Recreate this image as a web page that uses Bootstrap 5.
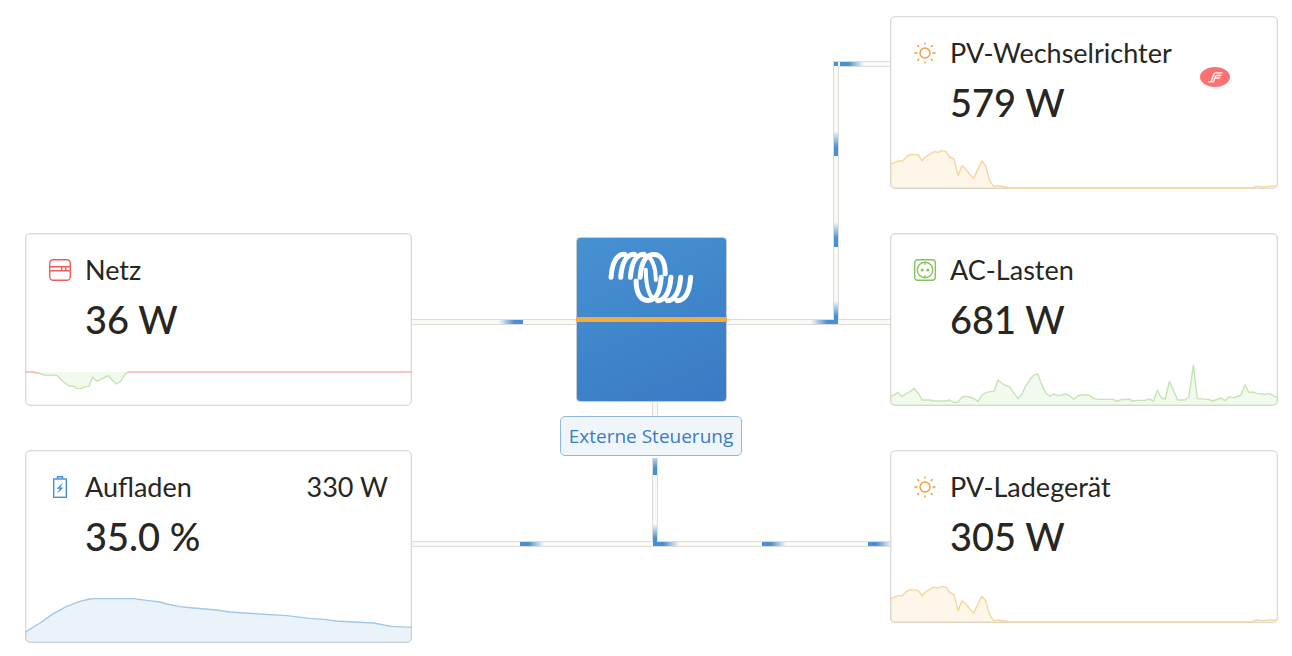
<!DOCTYPE html>
<html lang="de">
<head>
<meta charset="utf-8">
<meta name="viewport" content="width=device-width, initial-scale=1">
<title>Energiefluss</title>
<link href="https://cdn.jsdelivr.net/npm/bootstrap@5.3.0/dist/css/bootstrap.min.css" rel="stylesheet">
<style>
  body { background: #fff; color: #272622; font-family: "Lato", "Open Sans", sans-serif; }
  .energy-grid { display: grid; grid-template-columns: 387fr 478fr 388fr; row-gap: 44px; padding: 16px 14px 12px 25px; }
  .tile { border: 1px solid #dbdad6; border-radius: 5px; box-shadow: inset 0 0 0 1px #f1f1ef; background: #fff; align-self: start; }
  .tile-main { padding: 20px 23px 3px; }
  .tile-icon { width: 22px; height: 22px; margin-right: 14px; flex: none; }
  .tile-title { font-size: 27px; line-height: 32px; font-weight: 400; margin: 0; }
  .tile-value { font-size: 38px; line-height: 48px; font-weight: 500; margin: 9px 0 0 36px; }
  .spark { display: block; width: calc(100% + 2px); height: 60px; margin: 0 -1px -1px; border-radius: 0 0 5px 5px; }
  .spark-tall { height: 80px; }
  .spark polygon { fill-opacity: .11; }
  .spark polyline { fill: none; stroke-width: 1.4; vector-effect: non-scaling-stroke; stroke-linejoin: round; }
  .brand { position: absolute; top: 50px; right: 47px; width: 30px; height: 20px; }
  .pv { grid-area: 1 / 3; } .grid-in { grid-area: 2 / 1; } .loads { grid-area: 2 / 3; }
  .battery { grid-area: 3 / 1; } .charger { grid-area: 3 / 3; }
  .wires { grid-area: 1 / 2 / 4 / 3; position: relative; }
  .wires svg { position: absolute; inset: 0; width: 100%; height: 100%; }
  .hub { grid-area: 2 / 2 / 4 / 3; padding-top: 4px; position: relative; }
  .inverter { width: 151px; height: 165px; border: 1px solid #c5cdd4; border-radius: 4px; background: linear-gradient(155deg, #4791d2, #397ac4); }
  .inverter-logo { height: 79px; padding-top: 13px; }
  .inverter-band { height: 5px; margin: 0 -1px; background: #f7a93b; }
  .mode { margin-top: 14px; height: 40px; padding: 0 8px; border: 1px solid #92b7e1; border-radius: 5px; background: #f0f5fa; color: #387dc5; font: 400 19px/38px "Open Sans", sans-serif; }
</style>
</head>
<body>
<main class="energy-grid">

  <div class="wires" aria-hidden="true">
    <svg viewBox="0 0 478 627" preserveAspectRatio="none">
      <defs>
        <linearGradient id="toRight"><stop offset="0" stop-color="#4790d2" stop-opacity="0"/><stop offset=".65" stop-color="#4790d2"/></linearGradient>
        <linearGradient id="toLeft"><stop offset=".35" stop-color="#4790d2"/><stop offset="1" stop-color="#4790d2" stop-opacity="0"/></linearGradient>
        <linearGradient id="toDown" x2="0" y2="1"><stop offset="0" stop-color="#4790d2" stop-opacity="0"/><stop offset=".65" stop-color="#4790d2"/></linearGradient>
        <linearGradient id="cutDown" x2="0" y2="1"><stop offset="0" stop-color="#4790d2" stop-opacity=".35"/><stop offset=".6" stop-color="#4790d2"/></linearGradient>
      </defs>
      <path fill="none" stroke="#dddcd8" stroke-width="6" d="M0 306H478M424 309V45M421 48H478M0 528H478M243 386V400M243 442V531"/>
      <path fill="none" stroke="#f9f9f5" stroke-width="4" d="M0 306H478M424 308V46M422 48H478M0 528H478M243 386V400M243 442V530"/>
      <rect fill="url(#toRight)" x="87" y="304" width="24" height="4"/>
      <rect fill="url(#toRight)" x="399" y="304" width="25" height="4"/>
      <rect fill="url(#toDown)" x="422" y="115" width="4" height="25"/>
      <rect fill="url(#toDown)" x="422" y="206" width="4" height="25"/>
      <rect fill="url(#toDown)" x="422" y="285" width="4" height="23"/>
      <rect fill="#4790d2" x="422" y="46" width="4" height="4"/>
      <rect fill="url(#toLeft)" x="428" y="46" width="24" height="4"/>
      <rect fill="url(#cutDown)" x="241" y="442" width="4" height="17"/>
      <rect fill="url(#toDown)" x="241" y="508" width="4" height="22"/>
      <rect fill="url(#toLeft)" x="243" y="526" width="24" height="4"/>
      <rect fill="url(#toLeft)" x="108" y="526" width="24" height="4"/>
      <rect fill="url(#toLeft)" x="350" y="526" width="24" height="4"/>
      <rect fill="url(#toLeft)" x="456" y="526" width="24" height="4"/>
    </svg>
  </div>

  <section class="tile pv position-relative">
    <div class="tile-main">
      <div class="d-flex align-items-center">
        <svg class="tile-icon" viewBox="0 0 22 22" fill="none" stroke="#f19b3c" stroke-width="1.400"><circle cx="11" cy="11" r="5"/><path d="M11 .5v2M11 19.500v2M.5 11h3M18.500 11h3M3.300 3.300l1.800 1.800M16.900 16.900l1.800 1.800M3.300 18.700l1.800-1.800M16.900 5.100l1.800-1.800"/></svg>
        <h2 class="tile-title">PV-Wechselrichter</h2>
      </div>
      <p class="tile-value">579 W</p>
    </div>
    <svg class="brand" viewBox="0 0 30 20"><ellipse cx="15" cy="10" rx="15" ry="10" fill="#fc7171"/><path d="M8 14.800h3l2.600-7.200q.6-1.800 2.200-1.800h6.700M11 14.800h2.400l1.800-5q.5-1.300 1.700-1.300h4.300M15.500 11h4.300" fill="none" stroke="#fff" stroke-width="1.300"/></svg>
    <svg class="spark" viewBox="15 354 1164 180" preserveAspectRatio="none">
      <polygon fill="#f7a93b" points="15,534 15,460 40,450 52,450 65,437 76,430 99,431 111,449 124,436 135,429 148,422 160,424 170,419 182,421 194,438 207,444 219,494 231,464 243,475 255,491 266,502 290,450 302,465 314,509 326,526 340,524 375,531 375,534"/>
      <polyline stroke="#f9d49d" points="15,460 40,450 52,450 65,437 76,430 99,431 111,449 124,436 135,429 148,422 160,424 170,419 182,421 194,438 207,444 219,494 231,464 243,475 255,491 266,502 290,450 302,465 314,509 326,526 340,524 375,531 1100,531 1115,526 1135,528 1155,526 1179,525"/>
    </svg>
  </section>

  <section class="tile grid-in">
    <div class="tile-main">
      <div class="d-flex align-items-center">
        <svg class="tile-icon" viewBox="0 0 22 22" fill="none" stroke="#f35c58" stroke-width="1.400"><rect x=".7" y=".7" width="20.600" height="20.600" rx="3.500"/><path d="M1 7.700h20M1 11.700h20M12.700 8v3.500M16.700 8v3.500"/></svg>
        <h2 class="tile-title">Netz</h2>
      </div>
      <p class="tile-value">36 W</p>
    </div>
    <svg class="spark" viewBox="15 363 1161 180" preserveAspectRatio="none">
      <polygon fill="#7fce5a" points="40,441 55,444 72,450 110,451 122,463 135,474 147,483 160,484 170,490 184,491 195,485 207,484 218,456 231,469 265,452 279,468 290,477 302,469 314,449 325,441"/>
      <polyline stroke="#c6e4b3" points="40,442 55,444 72,450 110,451 122,463 135,474 147,483 160,484 170,490 184,491 195,485 207,484 218,456 231,469 265,452 279,468 290,477 302,469 314,449 325,441"/>
      <polyline stroke="#f9b4b1" points="15,441 40,441 55,444"/>
      <polyline stroke="#f9b4b1" points="322,442 330,441 1176,441"/>
    </svg>
  </section>

  <section class="tile loads">
    <div class="tile-main">
      <div class="d-flex align-items-center">
        <svg class="tile-icon" viewBox="0 0 22 22" fill="none" stroke="#83c55d" stroke-width="1.400"><rect x=".7" y=".7" width="20.600" height="20.600" rx="3"/><circle cx="11" cy="11" r="7.700"/><path d="M11 3.300v2.400M11 16.300v2.400"/><circle cx="8.200" cy="11" r="1.500" fill="#83c55d" stroke="none"/><circle cx="13.800" cy="11" r="1.500" fill="#83c55d" stroke="none"/></svg>
        <h2 class="tile-title">AC-Lasten</h2>
      </div>
      <p class="tile-value">681 W</p>
    </div>
    <svg class="spark" viewBox="15 363 1164 180" preserveAspectRatio="none">
      <polygon fill="#7fce5a" points="15,543 15,513 25,511 39,502 51,515 63,506 75,500 87,490 99,503 111,525 135,525 145,528 182,528 194,525 206,532 218,532 231,516 243,514 255,516 267,521 279,529 291,510 303,503 315,500 327,499 339,465 350,474 362,482 375,486 387,505 399,521 411,507 423,481 435,463 446,451 458,446 470,479 482,503 494,514 506,507 518,512 530,510 542,507 554,512 566,523 578,513 590,510 612,510 625,520 640,523 685,523 697,529 709,523 720,524 732,522 744,528 756,526 780,526 793,521 805,529 817,496 829,519 841,522 853,470 865,495 878,525 900,525 912,515 925,420 937,521 970,523 984,528 996,523 1008,519 1020,527 1032,515 1043,518 1055,516 1068,510 1080,480 1092,502 1104,501 1116,505 1140,508 1153,506 1165,512 1179,520 1179,543"/>
      <polyline stroke="#c6e4b3" points="15,513 25,511 39,502 51,515 63,506 75,500 87,490 99,503 111,525 135,525 145,528 182,528 194,525 206,532 218,532 231,516 243,514 255,516 267,521 279,529 291,510 303,503 315,500 327,499 339,465 350,474 362,482 375,486 387,505 399,521 411,507 423,481 435,463 446,451 458,446 470,479 482,503 494,514 506,507 518,512 530,510 542,507 554,512 566,523 578,513 590,510 612,510 625,520 640,523 685,523 697,529 709,523 720,524 732,522 744,528 756,526 780,526 793,521 805,529 817,496 829,519 841,522 853,470 865,495 878,525 900,525 912,515 925,420 937,521 970,523 984,528 996,523 1008,519 1020,527 1032,515 1043,518 1055,516 1068,510 1080,480 1092,502 1104,501 1116,505 1140,508 1153,506 1165,512 1179,520"/>
    </svg>
  </section>

  <section class="tile battery">
    <div class="tile-main">
      <div class="d-flex align-items-center">
        <svg class="tile-icon" viewBox="0 0 22 22" fill="none" stroke="#4790d2" stroke-width="1.400"><rect x="4.700" y="3" width="12.600" height="18.300"/><path d="M8.500 3V.8h5V3"/><path d="M14.200 6.500L7.500 12.700h3.200L7.800 18l6.700-6.600h-3.200z" fill="#4790d2" stroke="none"/></svg>
        <h2 class="tile-title">Aufladen</h2>
        <span class="tile-title ms-auto">330 W</span>
      </div>
      <p class="tile-value">35.0 %</p>
    </div>
    <svg class="spark spark-tall" viewBox="15 372 1161 240" preserveAspectRatio="none">
      <polygon fill="#4790d2" points="15,612 15,580 60,552 100,524 140,502 180,487 210,480 225,479 340,479 380,484 420,489 440,495 480,503 520,507 590,513 630,519 720,525 800,530 870,538 920,542 945,546 1060,552 1115,562 1176,565 1176,612"/>
      <polyline stroke="#a3c7e8" points="15,580 60,552 100,524 140,502 180,487 210,480 225,479 340,479 380,484 420,489 440,495 480,503 520,507 590,513 630,519 720,525 800,530 870,538 920,542 945,546 1060,552 1115,562 1176,565"/>
    </svg>
  </section>

  <section class="tile charger">
    <div class="tile-main">
      <div class="d-flex align-items-center">
        <svg class="tile-icon" viewBox="0 0 22 22" fill="none" stroke="#f19b3c" stroke-width="1.400"><circle cx="11" cy="11" r="5"/><path d="M11 .5v2M11 19.500v2M.5 11h3M18.500 11h3M3.300 3.300l1.800 1.800M16.900 16.900l1.800 1.800M3.300 18.700l1.800-1.800M16.900 5.100l1.800-1.800"/></svg>
        <h2 class="tile-title">PV-Ladegerät</h2>
      </div>
      <p class="tile-value">305 W</p>
    </div>
    <svg class="spark" viewBox="15 369 1164 180" preserveAspectRatio="none">
      <polygon fill="#f7a93b" points="15,549 15,477 38,467 52,467 65,454 76,449 99,451 111,467 124,454 145,442 160,444 172,439 184,442 194,457 207,464 219,512 231,482 243,492 255,508 266,519 290,469 302,482 314,524 326,542 340,540 375,546 375,549"/>
      <polyline stroke="#f9d49d" points="15,477 38,467 52,467 65,454 76,449 99,451 111,467 124,454 145,442 160,444 172,439 184,442 194,457 207,464 219,512 231,482 243,492 255,508 266,519 290,469 302,482 314,524 326,542 340,540 375,546 1098,546 1115,540 1135,542 1155,540 1179,541"/>
    </svg>
  </section>

  <div class="hub d-flex flex-column align-items-center">
    <div class="inverter">
      <div class="inverter-logo d-flex justify-content-center">
        <svg width="86" height="54" viewBox="147 79 257 160" fill="none" stroke="#fff" stroke-width="15" stroke-linecap="round" role="img" aria-label="Victron Energy">
          <path d="M156 157C159 115 172 88 197 88M185 157C188 115 202 88 226 88M214 157C217 115 231 88 255 88M243 157C246 115 260 89 284 89C308 89 318 115 318 146"/>
          <path d="M394 157C391 199 378 226 353 227M364 157C361 199 347 226 324 227M335 157C332 199 318 226 295 227M306 157C303 199 290 226 266 226C242 226 231 200 231 168"/>
          <path stroke-width="12" d="M260 134C260 180 268 206 281 220M270 96C284 112 290 130 290 165"/>
        </svg>
      </div>
      <div class="inverter-band"></div>
    </div>
    <div class="mode">Externe Steuerung</div>
  </div>

</main>
<script src="https://cdn.jsdelivr.net/npm/bootstrap@5.3.0/dist/js/bootstrap.bundle.min.js"></script>
</body>
</html>
